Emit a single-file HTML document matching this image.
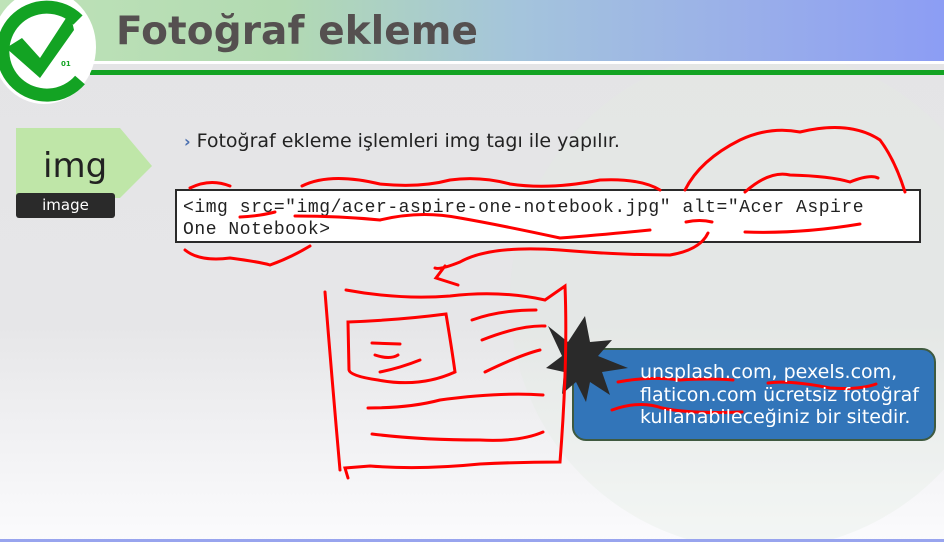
<!DOCTYPE html>
<html><head><meta charset="utf-8"><style>
html,body{margin:0;padding:0}
body{width:944px;height:542px;position:relative;overflow:hidden;font-family:"DejaVu Sans","Liberation Sans",sans-serif;background:linear-gradient(#e4e4e6 0%,#e6e6e8 60%,#f6f6f8 90%,#fbfbfd 100%)}
.hdr{position:absolute;left:0;top:0;width:944px;height:62px;background:linear-gradient(90deg,#bfe3b8 0%,#b2dab2 30%,#a4c4dc 55%,#99aeea 80%,#8c9df4 100%)}
.wl{position:absolute;left:90px;top:61px;width:854px;height:3px;background:#fff}
.gl{position:absolute;left:90px;top:70px;width:854px;height:5px;background:#13a323}
.title{position:absolute;left:116px;top:9px;font-size:39px;font-weight:bold;color:#555050;letter-spacing:0.1px}
.logo{position:absolute;left:-8px;top:-10px;width:104px;height:114px;border-radius:50%;background:#fff}
.bullet{position:absolute;left:184px;top:130px;font-size:19px;color:#222;white-space:nowrap}
.code{position:absolute;left:175px;top:189px;width:746px;height:54px;background:#fff;border:2px solid #2a2a2a;box-sizing:border-box;font-family:"Liberation Mono",monospace;font-size:18px;letter-spacing:0.55px;line-height:22px;padding:6px 0 0 6px;color:#222;white-space:nowrap}
.tag{position:absolute;left:16px;top:128px;width:136px;height:70px}
.tagt{position:absolute;left:43px;top:146px;font-size:34px;color:#222}
.lbl{position:absolute;left:16px;top:193px;width:99px;height:25px;background:#2a2a2a;border-radius:3px;color:#fff;font-size:15px;text-align:center;line-height:25px}
.box{position:absolute;left:572px;top:348px;width:364px;height:93px;background:#3275b9;border:2px solid #3f5a40;border-radius:14px;box-sizing:border-box}
.boxt{position:absolute;left:640px;top:361px;font-size:19px;line-height:22.5px;color:#fff;white-space:nowrap}
.bl{position:absolute;left:0;top:539px;width:944px;height:3px;background:#98a4ee}
</style></head><body>
<svg style="position:absolute;left:0;top:0" width="944" height="542">
<circle cx="760" cy="300" r="250" fill="#e2eae2" opacity="0.3"/>
</svg>
<div class="hdr"></div>
<div class="wl"></div><div class="gl"></div>
<div class="title">Fotoğraf ekleme</div>
<div class="logo"></div>
<svg style="position:absolute;left:0;top:0" width="100" height="110">
<path d="M78 20 A44 44 0 1 0 80 80" fill="none" stroke="#13a323" stroke-width="13"/>
<path d="M6 48 L22 38 L40 58 L70 12 L74 30 L40 78 Z" fill="#13a323"/>
<text x="61" y="66" font-size="7" fill="#13a323" font-weight="bold" font-family="DejaVu Sans">01</text>
</svg>
<svg class="tag" viewBox="0 0 136 70"><polygon points="0,0 104,0 136,38 104,70 0,70" fill="#bfe6a8"/></svg>
<div class="tagt">img</div>
<div class="lbl">image</div>
<div class="bullet"><span style="color:#4a6fb0;font-weight:bold;font-size:16px;margin-right:6px">›</span>Fotoğraf ekleme işlemleri img tagı ile yapılır.</div>
<div class="code">&lt;img src="img/acer-aspire-one-notebook.jpg" alt="Acer Aspire<br>One Notebook&gt;</div>
<div class="box"></div>
<svg style="position:absolute;left:0;top:0" width="944" height="542">
<polygon points="585,316 590,342 612,340 598,356 628,368 602,372 610,395 590,382 586,402 576,382 562,394 564,372 546,368 562,356 548,326 568,342" fill="#2a2a2a"/>
<g fill="none" stroke="#f00" stroke-width="3" stroke-linecap="round">
<path d="M190 188 Q210 178 230 186"/>
<path d="M302 186 Q330 172 380 184 Q420 188 450 180 Q480 176 510 184 Q550 190 600 180 Q640 178 660 190"/>
<path d="M685 190 Q700 160 740 140 Q770 126 800 132 Q850 120 880 140 Q895 160 905 192"/>
<path d="M745 192 Q770 170 790 175 Q830 176 850 182 Q870 174 878 178"/>
<path d="M240 217 Q260 216 275 212"/>
<path d="M295 216 Q340 216 380 220 Q420 210 460 218 Q500 225 560 238 Q600 235 650 230"/>
<path d="M686 222 Q700 219 712 222"/>
<path d="M745 232 Q800 234 860 224"/>
<path d="M185 250 Q200 262 230 258 Q260 262 270 265 Q290 258 310 246"/>
<path d="M708 233 Q700 250 670 255 Q620 255 560 250 Q490 245 460 262 Q440 270 435 268 M445 266 L436 278 L458 285"/>
<path d="M325 292 Q332 380 340 470 M346 290 Q400 300 450 296 Q500 290 545 300 L565 286 Q568 360 560 462 Q520 462 480 464 Q420 470 370 466 L345 468 L348 478"/>
<path d="M348 322 Q400 320 446 314 Q452 350 455 372 Q420 388 378 380 Q350 376 349 370 Z"/>
<path d="M372 343 L400 344 M375 355 Q390 360 398 355 M380 372 Q400 368 420 360"/>
<path d="M472 320 Q500 310 536 310 M482 340 Q520 325 545 326 M485 372 Q520 355 540 350 M368 408 Q410 408 440 400 Q500 392 543 395 M372 434 Q420 440 480 440 Q520 442 543 432"/>
<path d="M618 382 Q650 376 680 380 Q710 378 733 380 M768 383 Q790 380 830 388 Q860 390 876 384 M612 410 Q640 400 662 408 Q690 414 742 412"/>
</g>
</svg>
<div class="boxt">unsplash.com, pexels.com,<br>flaticon.com ücretsiz fotoğraf<br>kullanabileceğiniz bir sitedir.</div>
<div class="bl"></div>
</body></html>
